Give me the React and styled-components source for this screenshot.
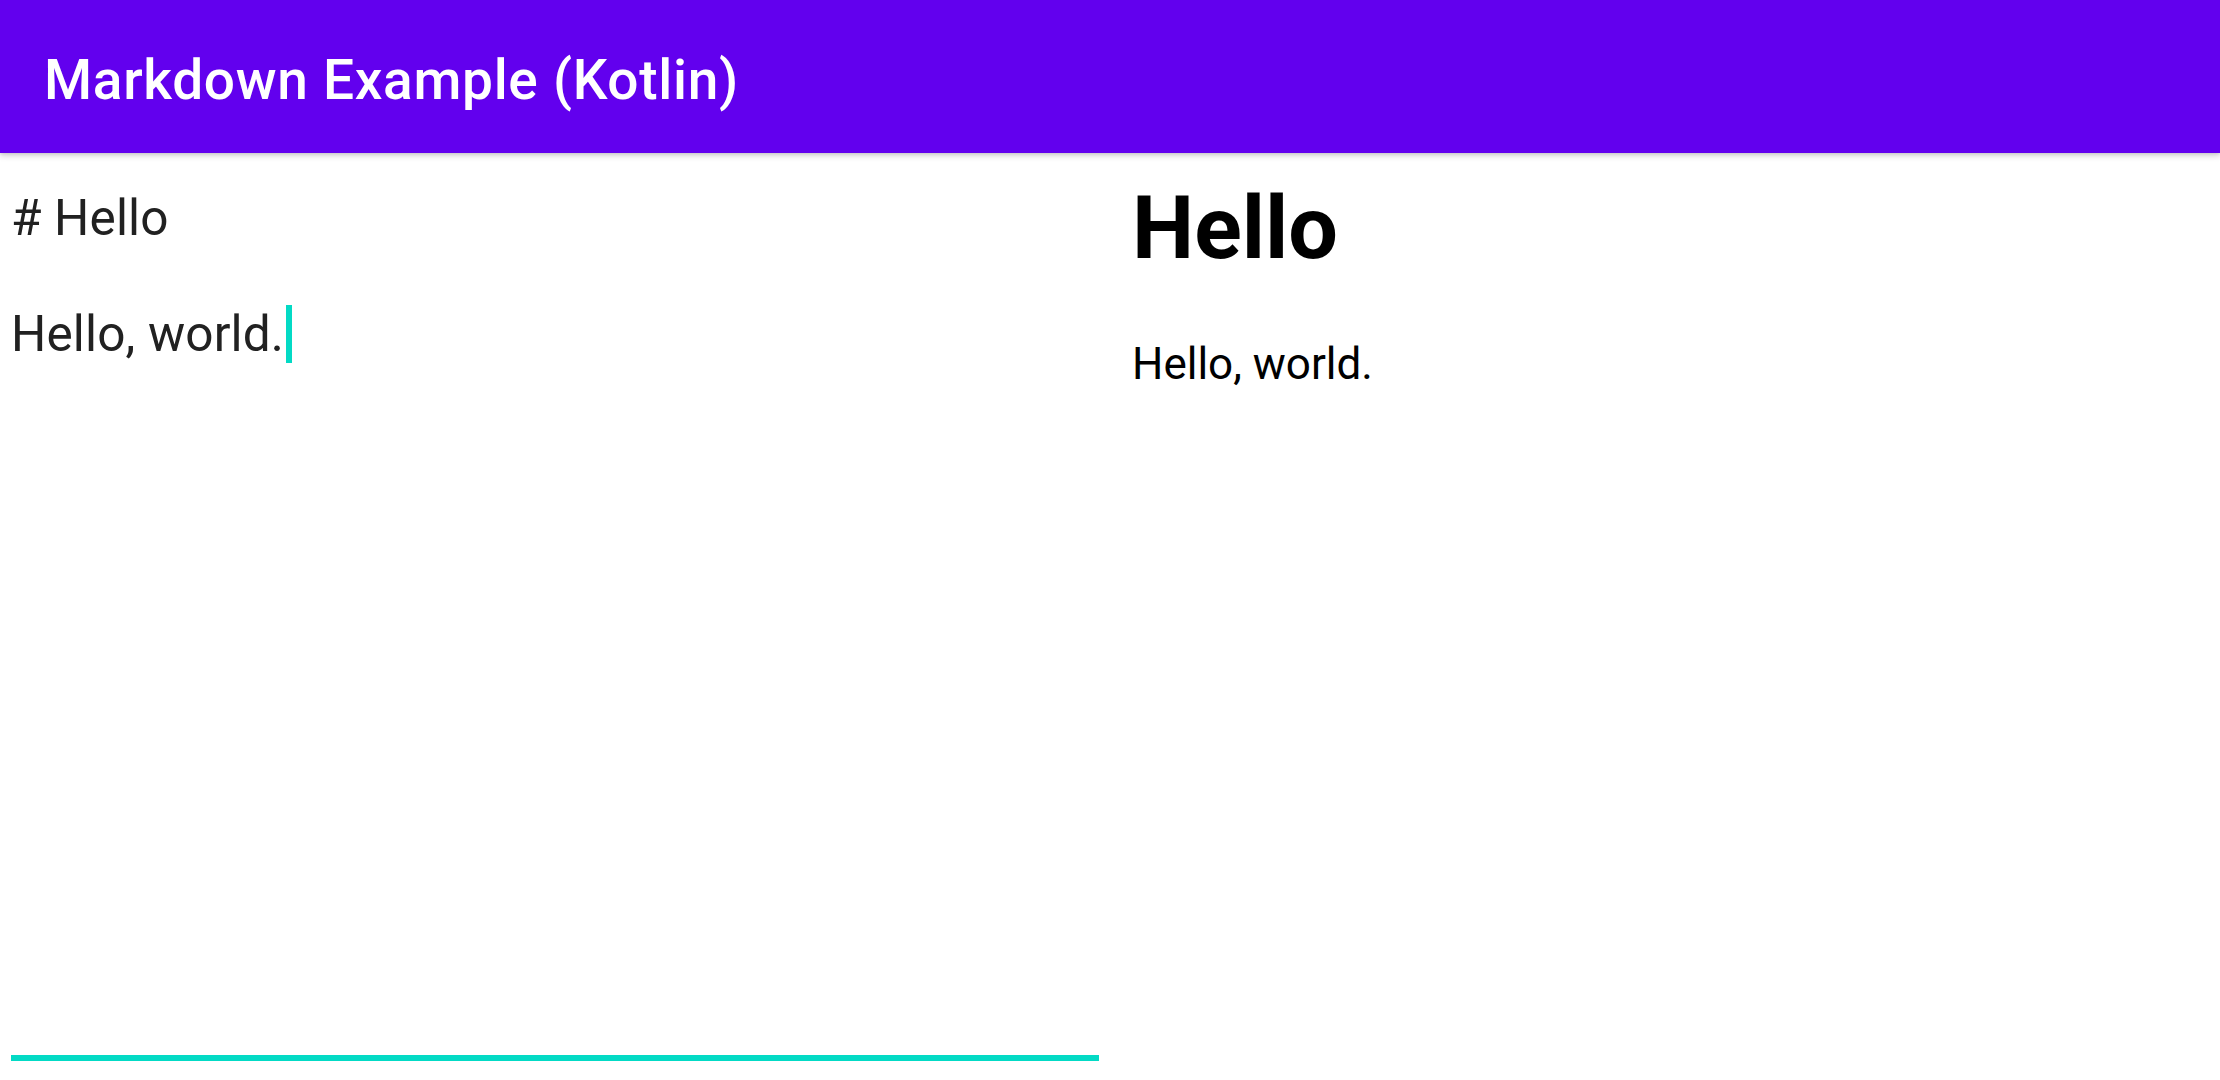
import React from 'react';
import styled, { createGlobalStyle } from 'styled-components';

const GlobalStyle = createGlobalStyle`
  html, body {
    margin: 0;
    padding: 0;
    background: #ffffff;
  }
  body {
    font-family: Roboto, "Noto Sans", "Liberation Sans", sans-serif;
  }
`;

const Screen = styled.div`
  width: 2220px;
  height: 1080px;
  display: flex;
  flex-direction: column;
  background: #ffffff;
  overflow: hidden;
`;

const TopBar = styled.header`
  flex: 0 0 153px;
  height: 153px;
  box-sizing: border-box;
  background: #6200ee;
  padding: 48px 0 0 44px;
  box-shadow: 0 3px 6px rgba(0, 0, 0, 0.16), 0 1px 3px rgba(0, 0, 0, 0.1);
  position: relative;
  z-index: 1;
`;

const Title = styled.h1`
  margin: 0;
  color: #ffffff;
  font-family: Roboto, sans-serif;
  font-weight: 500;
  font-size: 55px;
  line-height: 64px;
  letter-spacing: 0.7px;
`;

const Panes = styled.main`
  flex: 1;
  display: grid;
  grid-template-columns: 1110px 1110px;
`;

const EditorPane = styled.section`
  display: flex;
  flex-direction: column;
  padding: 0 11px 19px 11px;
`;

const Editor = styled.div`
  flex: 1;
  padding-top: 36px;
  border-bottom: 6px solid #03dac5;
  font-family: Roboto, sans-serif;
  font-size: 49.5px;
  line-height: 58px;
  letter-spacing: 0.15px;
  color: #212121;
`;

const EditorLine = styled.div`
  height: 58px;
  white-space: pre;
`;

const Caret = styled.span`
  display: inline-block;
  width: 6px;
  height: 58px;
  margin-left: 2px;
  vertical-align: top;
  background: #03dac5;
`;

const PreviewPane = styled.section`
  padding: 23px 22px 0 22px;
  color: #000000;
  font-family: Roboto, sans-serif;
`;

const Heading = styled.h1`
  margin: 0;
  font-size: 88px;
  font-weight: 700;
  line-height: 103px;
`;

const Paragraph = styled.p`
  margin: 59px 0 0 0;
  font-size: 44px;
  line-height: 52px;
`;

const App = () => (
  <Screen>
    <GlobalStyle />
    <TopBar>
      <Title>Markdown Example (Kotlin)</Title>
    </TopBar>
    <Panes>
      <EditorPane>
        <Editor>
          <EditorLine># Hello</EditorLine>
          <EditorLine> </EditorLine>
          <EditorLine>
            Hello, world.<Caret />
          </EditorLine>
        </Editor>
      </EditorPane>
      <PreviewPane>
        <Heading>Hello</Heading>
        <Paragraph>Hello, world.</Paragraph>
      </PreviewPane>
    </Panes>
  </Screen>
);

export default App;
